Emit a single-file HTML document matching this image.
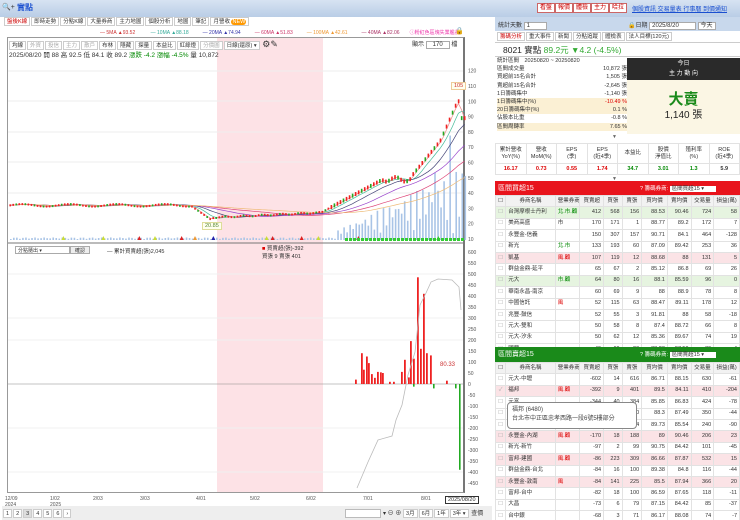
<!DOCTYPE html>
<html><head><meta charset="utf-8">
<style>
*{margin:0;padding:0;box-sizing:border-box}
body{width:740px;height:520px;overflow:hidden;background:#fff;font-family:"Liberation Sans","Noto Sans CJK TC",sans-serif;font-size:6px;color:#333;position:relative}
.a{position:absolute;white-space:nowrap}
.btn{position:absolute;border:1px solid #c66;background:#fff;color:#c00;font-size:6px;height:10px;line-height:8px;padding:0 2px;top:3px}
.tab{display:inline-block;border:1px solid #ccc;padding:0 2px;height:9px;line-height:8px;margin-right:1px;background:#fff;font-size:5.5px}
table{border-collapse:collapse;position:absolute;table-layout:fixed}
td{border:1px solid #e2e2e2;font-size:5.5px;height:11.4px;line-height:9px;padding:0 2px;text-align:right;overflow:hidden;white-space:nowrap}
.rt tr{height:11.4px}
td.n{text-align:left}
tr.h td{background:#f2f2f2;text-align:center}
tr.g td{background:#e6f4e0}
tr.p td{background:#fbe3e6}
.r{color:#d00}.gr{color:#080}
</style></head><body>
<div class="a" style="left:0;top:0;width:740px;height:17px;background:linear-gradient(#d7e3f2,#b9cde6)"></div>
<div class="a" style="left:2px;top:3px;font-size:7px;color:#333">🔍+</div>
<div class="a" style="left:17px;top:2px;font-size:8px;color:#1a4fd0;font-weight:bold">實點</div>
<div class="btn" style="left:537px">看盤</div><div class="btn" style="left:555px">報價</div><div class="btn" style="left:573px">體檢</div><div class="btn" style="left:591px">主力</div><div class="btn" style="left:609px">哈拉</div>
<div class="a" style="left:632px;top:4px;font-size:6px;color:#1a4fd0;text-decoration:underline">個股資訊 交易量表 行事曆 到價通知</div>
<div class="a" style="left:4px;top:17px">
<span class="tab" style="color:#c00">盤後K線</span><span class="tab">即時走勢</span><span class="tab">分點K線</span><span class="tab">大量券商</span><span class="tab">主力地圖</span><span class="tab">個股分析</span><span class="tab">地圖</span><span class="tab">筆記</span><span class="tab">月營收 <span style="background:#f90;color:#fff;border-radius:3px;padding:0 1px">NEW</span></span></div>
<div class="a" style="left:100px;top:29px;font-size:5px;color:#c33">— 5MA ▲93.52 <span style="color:#3a9;margin-left:14px">— 10MA ▲88.18</span><span style="color:#33a;margin-left:14px">— 20MA ▲74.94</span><span style="color:#c36;margin-left:14px">— 60MA ▲51.83</span><span style="color:#e93;margin-left:14px">— 100MA ▲42.61</span><span style="color:#a36;margin-left:14px">— 40MA ▲82.06</span><span style="color:#e3a;margin-left:10px">ⓘ粉紅色區塊失業艦長</span></div>
<div class="a" style="left:455px;top:27px;font-size:7px">🔒</div>
<div class="a" style="left:7px;top:37px;width:458px;height:456px;border:1px solid #999;border-right:2px solid #777;background:#fff"></div>
<div class="a" style="left:217px;top:38px;width:106px;height:454px;background:#fde2e6"></div>
<div class="a" style="left:9px;top:39px">
<span class="tab">均線</span><span class="tab" style="color:#aaa">外資</span><span class="tab" style="color:#aaa">投信</span><span class="tab" style="color:#aaa">主力</span><span class="tab" style="color:#aaa">散戶</span><span class="tab">布林</span><span class="tab">隱藏</span><span class="tab">探量</span><span class="tab">本益比</span><span class="tab">紅綠燈</span><span class="tab" style="color:#aaa">分價圖</span><span class="tab">日線(還原) ▾</span> <span style="font-size:9px">⚙✎</span></div>
<div class="a" style="left:9px;top:49px;font-size:6.5px">2025/08/20 開 88 高 92.5 低 84.1 收 89.2 <span class="gr">漲跌 -4.2 漲幅 -4.5%</span> 量 10,872</div>
<div class="a" style="left:412px;top:39px;font-size:6px">顯示 <span style="border:1px solid #aaa;padding:0 6px">170</span> 檔</div>
<svg class="a" style="left:0;top:0" width="740" height="520" id="ch"></svg>
<div class="a" style="left:15px;top:246px;width:55px;height:8px;border:1px solid #aaa;font-size:5px;padding-left:2px">分點隨出 ▾</div>
<div class="a" style="left:70px;top:246px;width:20px;height:8px;border:1px solid #aaa;background:#eee;font-size:5px;text-align:center">確認</div>
<div class="a" style="left:107px;top:247px;font-size:5.5px">— 累計買賣超(張)2,045</div>
<div class="a" style="left:262px;top:245px;font-size:5.5px;line-height:8px"><span class="r">■</span> 買賣超(張)-392<br>買張 9 賣張 401</div>
<div class="a" style="left:440px;top:362px;font-size:6px;color:#c33">80.33</div>
<div class="a" style="left:202px;top:222px;font-size:5.5px;color:#583;background:#ffe;border:1px solid #dd9;padding:0 2px">20.85</div>
<div class="a" style="left:451px;top:82px;font-size:5.5px;color:#c33;background:#ffe;border:1px solid #ec9;padding:0 2px">105</div>
<div class="a" style="left:445px;top:496px;border:1px solid #333;font-size:5.5px;padding:0 2px">2025/08/20</div>
<div class="a" style="left:2px;top:506px;width:490px;height:14px;background:#eee"></div>
<div class="a" style="left:3px;top:509px"><span class="tab">1</span><span class="tab">2</span><span class="tab" style="background:#ddd">3</span><span class="tab">4</span><span class="tab">5</span><span class="tab">6</span><span class="tab">›</span></div>
<div class="a" style="left:345px;top:509px;width:36px;height:9px;border:1px solid #bbb;background:#fff"></div>
<div class="a" style="left:383px;top:508px;font-size:6px">▾ ⊖ ⊕ <span class="tab">3月</span><span class="tab">6月</span><span class="tab">1年</span><span class="tab">3年 ▾</span> 查價</div>
<div class="a" style="left:495px;top:17px;width:245px;height:14px;background:#c8d8ec"></div>
<div class="a" style="left:498px;top:20px;font-size:6px">統計天數 <span style="border:1px solid #aaa;background:#fff;padding:0 16px 0 2px">1</span></div>
<div class="a" style="left:628px;top:20px;font-size:6px">🔒日期 <span style="border:1px solid #aaa;background:#fff;padding:0 16px 0 2px">2025/8/20</span> <span style="border:1px solid #aaa;background:#fff;padding:0 2px">今天</span></div>
<div class="a" style="left:497px;top:32px"><span class="tab" style="color:#c00">籌碼分析</span><span class="tab">重大事件</span><span class="tab">新聞</span><span class="tab">分點追蹤</span><span class="tab">體檢表</span><span class="tab">法人目標(120元)</span></div>
<div class="a" style="left:495px;top:42px;width:245px;height:15px;border-top:1px solid #ccc;border-bottom:1px solid #ccc"></div>
<div class="a" style="left:503px;top:44px;font-size:8.5px;color:#222">8021 實點 <span style="color:#3a3">89.2元 ▼4.2 (-4.5%)</span></div>
<div class="a" style="left:627px;top:58px;width:113px;height:22px;background:#2a2a2a;color:#fff;text-align:center;font-size:6px;line-height:10px;padding-top:1px">今日<br>主 力 動 向</div>
<div class="a" style="left:627px;top:80px;width:113px;height:54px;background:#fbf6e4"></div>
<div class="a" style="left:627px;top:88px;width:113px;text-align:center;font-size:15px;color:#1a8a1a;font-weight:bold">大賣</div>
<div class="a" style="left:627px;top:106px;width:113px;text-align:center;font-size:10px;color:#222">1,140 張</div>
<div class="a" style="left:497px;top:57px;width:130px;font-size:5.5px;line-height:8.2px">
<div>統計區間　20250820 ~ 20250820</div>
<div>區間成交量<span style="float:right">10,872 張</span></div>
<div>買超前15名合計<span style="float:right">1,505 張</span></div>
<div>賣超前15名合計<span style="float:right">-2,645 張</span></div>
<div>1日籌碼集中<span style="float:right">-1,140 張</span></div>
<div style="background:#fbf0d4">1日籌碼集中(%)<span style="float:right" class="r">-10.49 %</span></div>
<div style="background:#fbf0d4">20日籌碼集中(%)<span style="float:right">0.1 %</span></div>
<div>佔股本比重<span style="float:right">-0.8 %</span></div>
<div style="background:#fbf0d4">區間周轉率<span style="float:right">7.65 %</span></div></div>
<div class="a" style="left:612px;top:134px;font-size:5px;color:#666">▼</div>
<table style="left:495px;top:143px;width:245px"><tr>
<td style="text-align:center;height:20px;line-height:7px">累計營收<br>YoY(%)</td><td style="text-align:center;line-height:7px">營收<br>MoM(%)</td><td style="text-align:center;line-height:7px">EPS<br>(季)</td><td style="text-align:center;line-height:7px">EPS<br>(近4季)</td><td style="text-align:center">本益比</td><td style="text-align:center;line-height:7px">股價<br>淨值比</td><td style="text-align:center;line-height:7px">殖利率<br>(%)</td><td style="text-align:center;line-height:7px">ROE<br>(近4季)</td></tr>
<tr style="font-weight:bold"><td style="text-align:center" class="r">16.17</td><td style="text-align:center" class="r">0.73</td><td style="text-align:center" class="r">0.55</td><td style="text-align:center" class="r">1.74</td><td style="text-align:center" class="gr">34.7</td><td style="text-align:center" class="gr">3.01</td><td style="text-align:center" class="gr">1.3</td><td style="text-align:center">5.9</td></tr></table>
<div class="a" style="left:612px;top:176px;font-size:5px;color:#666">▼</div>
<div class="a" style="left:495px;top:181px;width:245px;height:14px;background:#e8141c;color:#fff;font-size:7px;padding:2px 3px">區間買超15<span style="position:absolute;left:145px;top:3px;font-size:5.5px">? 籌碼券商: <span style="background:#fff;color:#333;padding:0 12px 0 2px">區間買超15 ▾</span></span></div>
<div id="t1"></div>
<div class="a" style="left:495px;top:347px;width:245px;height:15px;background:#1a8a1a;color:#fff;font-size:7px;padding:2px 3px">區間賣超15<span style="position:absolute;left:145px;top:3px;font-size:5.5px">? 籌碼券商: <span style="background:#fff;color:#333;padding:0 12px 0 2px">區間賣超15 ▾</span></span></div>
<div id="t2"></div>
<div class="a" style="left:507px;top:402px;width:130px;height:27px;background:#fff;border:1px solid #888;border-radius:4px;font-size:6px;padding:3px 4px;line-height:9px;color:#444;z-index:5">福邦 (6480)<br>台北市中正區忠孝西路一段6號5樓部分</div>
<script>
const s=document.getElementById('ch');let h='';
const py=p=>239-(p-10)*1.53;
[71,101,132,162,193].forEach(y=>h+=`<line x1="8" x2="463" y1="${y}" y2="${y}" stroke="#eee"/>`);
for(let v=120;v>=10;v-=10)h+=`<text x="468" y="${py(v)+2}" font-size="5" fill="#555">${v}</text>`;
h+=`<line x1="8" x2="463" y1="243" y2="243" stroke="#777"/>`;
const P=[];for(let i=0;i<=150;i++){let x=10+i*3.03,p;
 if(x<190)p=32+Math.sin(i*.4)*0.8;else if(x<212)p=32-(x-190)*0.45;else if(x<320)p=24+(x-212)*0.03+Math.sin(i)*0.4;else if(x<380)p=27+(x-320)*0.35;else if(x<410)p=49+Math.sin(i)*1.5;else if(x<440)p=50+(x-410)*0.8;else if(x<456)p=74+(x-440)*1.5;else p=100;
 if(x>460)p=89;P.push([x,p]);}
const ma=(n,c)=>{let d='';for(let i=0;i<P.length;i++){let a=0,k=0;for(let j=Math.max(0,i-n);j<=i;j++){a+=P[j][1];k++}d+=(i?'L':'M')+P[i][0].toFixed(1)+' '+py(a/k).toFixed(1)}h+=`<path d="${d}" fill="none" stroke="${c}" stroke-width=".7"/>`};
P.forEach(([x,p],i)=>{let v=x>335?(Math.abs(Math.sin(i*1.7))*(x-330)*0.5+6):1+Math.abs(Math.sin(i))*1.5;if(x>410&&i%5==0)v*=1.6;v=Math.min(v,140);h+=`<rect x="${x}" y="${240-v}" width="1.6" height="${v}" fill="#a9c4e6"/>`;});
ma(4,'#4b9');ma(10,'#447');ma(20,'#94c');ma(35,'#d47');ma(55,'#eb7');ma(1,'#e88');
P.forEach(([x,p],i)=>{let up=Math.sin(i*2.1)>-0.3;let hh=x>330?4:2;h+=`<rect x="${x-0.6}" y="${py(p)-hh/2}" width="1.6" height="${hh}" fill="${up?'#e22':'#2a2'}"/>`});
[[190,'#cd3'],[310,'#cd3'],[418,'#d22'],[465,'#cd3'],[545,'#d22'],[585,'#e93'],[640,'#22a'],[800,'#cd3'],[818,'#d22'],[905,'#d22'],[955,'#cd3'],[1075,'#d22'],[1315,'#3c3']].forEach(([x,c])=>h+=`<path d="M${x/3} 236l2 4h-4z" fill="${c}"/>`);
for(let x=345;x<462;x+=4)h+=`<rect x="${x}" y="238" width="3" height="3" fill="#3c3"/>`;
const ly=v=>384-v*0.22;
for(let v=600;v>=-450;v-=50)h+=`<text x="468" y="${ly(v)+2}" font-size="5" fill="#555">${v}</text>`;
[274,318,340,428,472].forEach(y=>h+=`<line x1="8" x2="463" y1="${y}" y2="${y}" stroke="#f0f0f0"/>`);
h+=`<line x1="8" x2="463" y1="384" y2="384" stroke="#888" stroke-width=".6"/>`;
const B=[[355,20],[361,140],[363,65],[366,125],[368,95],[371,45],[374,28],[377,55],[380,53],[382,50],[393,10],[401,55],[404,110],[408,30],[410,195],[413,115],[417,485],[420,160],[423,410],[426,140],[430,130],[446,15],[389,10]];
B.forEach(([x,v])=>h+=`<rect x="${x}" y="${ly(v)}" width="1.8" height="${v*0.22}" fill="#e22"/>`);
[[413,-12],[433,-20],[455,-20],[459,-390]].forEach(([x,v])=>h+=`<rect x="${x}" y="384" width="1.6" height="${-v*0.22}" fill="#2a2"/>`);
h+=`<path d="M357 488L368 462L378 440L392 436L396 420L402 405L408 375L415 352L420 305L426 293L431 282L438 279L452 280L459 287L461 310" fill="none" stroke="#bbb" stroke-width=".8"/>`;
const D=[[5,'12/09'],[50,'1/02'],[93,'2/03'],[140,'3/03'],[196,'4/01'],[250,'5/02'],[306,'6/02'],[363,'7/01'],[421,'8/01']];
D.forEach(([x,t])=>h+=`<text x="${x}" y="500" font-size="5" fill="#555">${t}</text>`);
h+=`<text x="5" y="506" font-size="5" fill="#555">2024</text><text x="50" y="506" font-size="5" fill="#555">2025</text>`;
s.innerHTML=h;
const W=[10,48,24,23,18,19,25,23,22,25];
function tbl(id,rows){let t=`<table class="rt" style="left:495px;top:0;width:245px"><colgroup>${W.map(w=>`<col style="width:${w}px">`).join('')}</colgroup><tr class="h"><td>☐</td><td>券商名稱</td><td>營業券商</td><td>買賣超</td><td>買張</td><td>賣張</td><td>買均價</td><td>賣均價</td><td>交易量</td><td>損益(萬)</td></tr>`;
rows.forEach(r=>{t+=`<tr class="${r[0]}"><td style="color:#aaa;text-align:center">${r[1]?'✓':'☐'}</td><td class="n">${r[2]}</td><td class="n ${r[3].c||''}">${r[3].t||''}</td>`+r.slice(4).map(v=>`<td>${v}</td>`).join('')+'</tr>'});
document.getElementById(id).outerHTML=`<div class="a" style="left:0;top:${id=='t1'?195:362}px;width:740px;height:${id=='t1'?152:158}px;overflow:hidden">${t}</table></div>`}
tbl('t1',[['g',0,'台灣摩根士丹利',{t:'北.市.顧',c:'gr'},412,568,156,88.53,90.46,724,58],['',0,'美商高盛',{t:'市'},170,171,1,88.77,89.2,172,7],['',0,'永豐金-信義',{},150,307,157,90.71,84.1,464,-128],['',0,'新光',{t:'北.市',c:'gr'},133,193,60,87.09,89.42,253,36],['p',0,'凱基',{t:'風.顧',c:'r'},107,119,12,88.68,88,131,5],['',0,'群益金鼎-延平',{},65,67,2,85.12,86.8,69,26],['g',0,'元大',{t:'市.顧',c:'gr'},64,80,16,88.1,85.59,96,0],['',0,'華南永昌-南京',{},60,69,9,88,88.9,78,8],['',0,'中國信託',{t:'風',c:'r'},52,115,63,88.47,89.11,178,12],['',0,'兆豐-鼓信',{},52,55,3,91.81,88,58,-18],['',0,'元大-雙和',{},50,58,8,87.4,88.72,66,8],['',0,'元大-汐永',{},50,62,12,85.36,89.67,74,19],['',0,'國票',{},49,69,20,88.23,87.59,89,4]]);
tbl('t2',[['',0,'元大-中壢',{},-602,14,616,86.71,88.15,630,-61],['p',1,'福邦',{t:'風.顧',c:'r'},-392,9,401,89.5,84.11,410,-204],['',0,'元富',{},-344,40,384,85.85,86.83,424,-78],['',0,'&nbsp;',{},-333,17,350,88.3,87.49,350,-44],['',0,'&nbsp;',{},-190,25,214,89.73,85.54,240,-90],['p',0,'永豐金-內湖',{t:'風.顧',c:'r'},-170,18,188,89,90.46,206,23],['',0,'新光-新竹',{},-97,2,99,90.75,84.42,101,-45],['p',0,'富邦-建國',{t:'風.顧',c:'r'},-86,223,309,86.66,87.87,532,15],['',0,'群益金鼎-台北',{},-84,16,100,89.38,84.8,116,-44],['p',0,'永豐金-敦南',{t:'風',c:'r'},-84,141,225,85.5,87.94,366,20],['',0,'富邦-台中',{},-82,18,100,86.59,87.65,118,-11],['',0,'大昌',{},-73,6,79,87.15,84.42,85,-37],['',0,'台中銀',{},-68,3,71,86.17,88.08,74,-7]]);
</script>
</body></html>
